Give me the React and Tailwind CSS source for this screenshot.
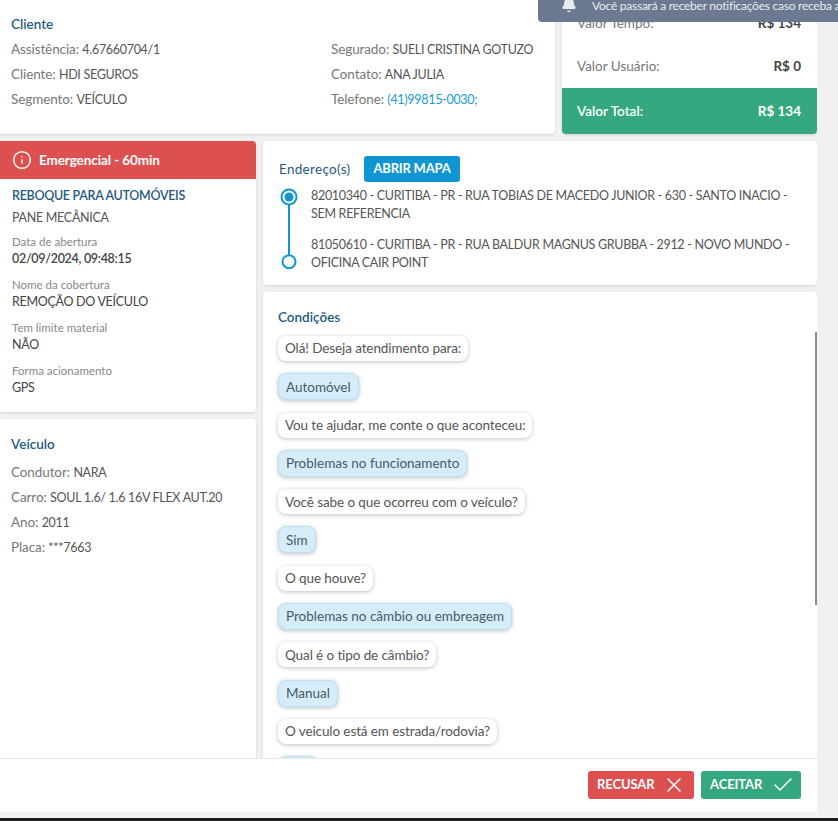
import { Info, X, Check, Bell } from 'lucide-react';

const font = '[font-family:Lato,"Noto_Sans",sans-serif]';
const caps = 'text-[12.5px] tracking-[-0.3px]';

const chat = [
  ['q', 'Olá! Deseja atendimento para:'],
  ['a', 'Automóvel'],
  ['q', 'Vou te ajudar, me conte o que aconteceu:'],
  ['a', 'Problemas no funcionamento'],
  ['q', 'Você sabe o que ocorreu com o veículo?'],
  ['a', 'Sim'],
  ['q', 'O que houve?'],
  ['a', 'Problemas no câmbio ou embreagem'],
  ['q', 'Qual é o tipo de câmbio?'],
  ['a', 'Manual'],
  ['q', 'O veiculo está em estrada/rodovia?'],
  ['a', 'Não'],
];

function Line({ label, children }) {
  return (
    <div className="h-[25px] leading-[25px] text-[13.5px] tracking-[-0.1px] text-[#777] whitespace-nowrap">
      {label}: <span className={`text-[#555] ${caps}`}>{children}</span>
    </div>
  );
}

function Field({ label, children, bold }) {
  return (
    <div className="mb-[10.3px]">
      <div className="text-[11.5px] leading-[16px] text-[#888]">{label}</div>
      <div className={`${caps} leading-[17px] text-[#444] ${bold ? 'font-semibold' : ''}`}>{children}</div>
    </div>
  );
}

export default function App() {
  return (
    <div className={`relative h-[821px] w-[838px] overflow-hidden bg-[#f1f1f1] ${font}`}>
      {/* toast */}
      <div className="absolute left-[538px] top-0 z-20 flex h-[22px] w-[300px] items-center gap-[15px] overflow-hidden rounded-bl bg-[#6b7a90] pl-[23px] text-[12px] tracking-[-0.25px] text-[#e8ebef] whitespace-nowrap">
        <Bell size={16} fill="currentColor" className="shrink-0 -translate-y-[6px]" />
        <span className="-translate-y-[5px]">Você passará a receber notificações caso receba a</span>
      </div>

      <div className="flex h-[758px] w-[817px] flex-col gap-[7px] overflow-hidden">
        {/* top row */}
        <div className="flex h-[134px] shrink-0 gap-[7px]">
          <div className="flex-1 rounded-br bg-white pl-[11px] pt-[16px] shadow-sm">
            <div className="mb-[4px] text-[13.5px] font-semibold leading-[17px] text-[#1f5a80]">Cliente</div>
            <div className="grid grid-cols-[320px_1fr]">
              <div>
                <Line label="Assistência">4.67660704/1</Line>
                <Line label="Cliente">HDI SEGUROS</Line>
                <Line label="Segmento">VEÍCULO</Line>
              </div>
              <div>
                <Line label="Segurado">SUELI CRISTINA GOTUZO</Line>
                <Line label="Contato">ANA JULIA</Line>
                <div className="h-[25px] text-[13.5px] tracking-[-0.1px] leading-[25px] text-[#777]">
                  Telefone: <span className={`text-[#1a9ad6] ${caps}`}>(41)99815-0030;</span>
                </div>
              </div>
            </div>
          </div>
          <div className="flex w-[255px] flex-col overflow-hidden rounded-b bg-white shadow-sm">
            <div className="flex-1 pl-[15px] pr-[16px] pt-[9px] text-[13.5px]">
              <div className="flex h-[28px] items-center justify-between text-[#777]">
                <span>Valor Tempo:</span>
                <span className="font-bold text-[#444]">R$ 134</span>
              </div>
              <div className="mt-[15px] flex h-[28px] items-center justify-between text-[#777]">
                <span>Valor Usuário:</span>
                <span className="font-bold text-[#444]">R$ 0</span>
              </div>
            </div>
            <div className="flex h-[46px] items-center justify-between bg-[#36a880] pl-[15px] pr-[16px] text-[13.5px] text-white">
              <span className="font-semibold">Valor Total:</span>
              <span className="font-bold">R$ 134</span>
            </div>
          </div>
        </div>

        {/* main */}
        <div className="flex min-h-0 flex-1 gap-[7px]">
          <div className="flex w-[256px] shrink-0 flex-col gap-[7px]">
            <div className="h-[271px] overflow-hidden rounded-r bg-white shadow-sm">
              <div className="flex h-[38px] items-center gap-[7px] bg-[#dd5050] pl-[12px] text-[13.5px] font-bold tracking-[-0.1px] text-white">
                <Info size={20} strokeWidth={1.75} />
                Emergencial - 60min
              </div>
              <div className="pl-[12px] pt-[8px]">
                <div className={`${caps} font-semibold leading-[17px] text-[#1f5a80]`}>REBOQUE PARA AUTOMÓVEIS</div>
                <div className={`${caps} mb-[7.5px] mt-[5px] leading-[17px] text-[#555]`}>PANE MECÂNICA</div>
                <Field label="Data de abertura" bold>02/09/2024, 09:48:15</Field>
                <Field label="Nome da cobertura">REMOÇÃO DO VEÍCULO</Field>
                <Field label="Tem limite material">NÃO</Field>
                <Field label="Forma acionamento">GPS</Field>
              </div>
            </div>
            <div className="flex-1 rounded-tr bg-white pl-[11px] pt-[17px] shadow-sm">
              <div className="mb-[7px] text-[13.5px] font-semibold leading-[17px] text-[#1f5a80]">Veículo</div>
              <Line label="Condutor">NARA</Line>
              <Line label="Carro">SOUL 1.6/ 1.6 16V FLEX AUT.20</Line>
              <Line label="Ano">2011</Line>
              <Line label="Placa">***7663</Line>
            </div>
          </div>

          <div className="flex min-w-0 flex-1 flex-col gap-[7px]">
            <div className="h-[144px] shrink-0 rounded bg-white pl-[16px] pt-[15px] shadow-sm">
              <div className="flex h-[26px] items-center gap-[14px]">
                <span className="w-[71px] text-[13.5px] tracking-[0.3px] whitespace-nowrap text-[#1f5a80]">Endereço(s)</span>
                <button className="h-[26px] w-[96px] rounded-[3px] bg-[#0f96d2] text-[13px] font-bold tracking-[-0.2px] text-white">ABRIR MAPA</button>
              </div>
              <div className="mt-[5px] flex gap-[12px]">
                <svg width="20" height="88" viewBox="0 0 20 88" className="shrink-0 text-[#0f96d2]" fill="none" stroke="currentColor">
                  <line x1="10" y1="18" x2="10" y2="68" strokeWidth="2" />
                  <circle cx="10" cy="10" r="7.5" strokeWidth="2" />
                  <circle cx="10" cy="10" r="4.5" fill="currentColor" stroke="none" />
                  <circle cx="10" cy="74.7" r="6.5" strokeWidth="2" />
                </svg>
                <div className={`w-[495px] ${caps} leading-[17.5px] text-[#555]`}>
                  <div>82010340 - CURITIBA - PR - RUA TOBIAS DE MACEDO JUNIOR - 630 - SANTO INACIO - SEM REFERENCIA</div>
                  <div className="mt-[14px]">81050610 - CURITIBA - PR - RUA BALDUR MAGNUS GRUBBA - 2912 - NOVO MUNDO - OFICINA CAIR POINT</div>
                </div>
              </div>
            </div>

            <div className="relative min-h-0 flex-1 overflow-hidden rounded-t bg-white pl-[15px] pt-[17px] shadow-sm">
              <div className="absolute right-0 top-[40px] h-[273px] w-[2px] bg-[#8a8f96]" />
              <div className="mb-[10px] text-[13.5px] font-semibold leading-[17px] text-[#1f5a80]">Condições</div>
              <div className="flex flex-col items-start gap-[12.3px]">
                {chat.map(([kind, text], i) => (
                  <div
                    key={i}
                    className={kind === 'q'
                      ? 'flex h-[25px] items-center rounded-lg bg-white px-[7px] text-[13.5px] tracking-[-0.1px] text-[#555] shadow-[0_1px_4px_rgba(0,0,0,0.25)] whitespace-nowrap'
                      : 'flex h-[27px] items-center rounded-lg border border-[#bde0f1] bg-[#d4edf9] px-[7px] text-[13.5px] text-[#4a5a66] shadow-[0_1px_4px_rgba(0,0,0,0.25)] whitespace-nowrap'}
                  >
                    {text}
                  </div>
                ))}
              </div>
            </div>
          </div>
        </div>
      </div>

      {/* footer */}
      <div className="flex h-[54px] w-[817px] items-start justify-end gap-[7px] border-t border-[#e8e8e8] bg-white pr-[16px] pt-[12px]">
        <button className="flex h-[28px] w-[106px] items-center justify-between rounded-[3px] bg-[#dd5050] pl-[9px] pr-[8px] text-[13px] font-bold tracking-[-0.1px] text-white">
          RECUSAR <X size={24} strokeWidth={1.5} />
        </button>
        <button className="flex h-[28px] w-[100px] items-center justify-between rounded-[3px] bg-[#36a880] pl-[9px] pr-[6px] text-[13px] font-bold tracking-[-0.1px] text-white">
          ACEITAR <Check size={24} strokeWidth={1.5} />
        </button>
      </div>
      <div className="absolute bottom-0 left-0 h-[3px] w-full bg-[#1a1c1e]" />
    </div>
  );
}
